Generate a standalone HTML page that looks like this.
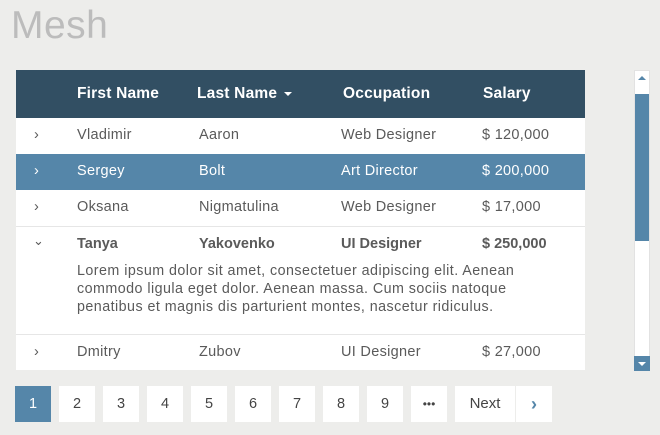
<!DOCTYPE html>
<html><head><style>
*{margin:0;padding:0;box-sizing:border-box}
body{width:660px;height:435px;background:#ededeb;font-family:"Liberation Sans",sans-serif;position:relative;overflow:hidden;color:#555}
.a{position:absolute;white-space:nowrap}
h1{position:absolute;left:11px;top:4px;font-weight:normal;font-size:39px;color:#bcbcbc;letter-spacing:0.5px}
.tbl{position:absolute;left:16px;top:70px;width:569px;height:300px;background:#fff}
.hd{position:absolute;left:0;top:0;width:569px;height:48px;background:#324f63;color:#fff;font-weight:bold;font-size:15.5px;letter-spacing:0.2px}
.row{position:absolute;left:0;width:569px;height:36px;font-size:14.5px;color:#5a5a5a;letter-spacing:0.3px}
.row span{position:absolute;top:9px}
.sel{background:#5586a9;color:#fff}
.bt{border-top:1px solid #e6e6e6}
.pg{position:absolute;top:386px;width:36px;height:36px;background:#fff;color:#444;font-size:14.5px;text-align:center;line-height:36px}
</style></head><body>
<h1>Mesh</h1>
<div class="tbl">
 <div class="hd">
  <span class="a" style="left:61px;top:15px">First Name</span>
  <span class="a" style="left:181px;top:15px">Last Name <span style="display:inline-block;border-left:4px solid transparent;border-right:4px solid transparent;border-top:4px solid #fff;vertical-align:middle;margin-left:2px"></span></span>
  <span class="a" style="left:327px;top:15px">Occupation</span>
  <span class="a" style="left:467px;top:15px">Salary</span>
 </div>
 <div class="row" style="top:48px"><span style="left:18px">›</span><span style="left:61px">Vladimir</span><span style="left:183px">Aaron</span><span style="left:325px">Web Designer</span><span style="left:466px">$ 120,000</span></div>
 <div class="row sel" style="top:84px"><span style="left:18px">›</span><span style="left:61px">Sergey</span><span style="left:183px">Bolt</span><span style="left:325px">Art Director</span><span style="left:466px">$ 200,000</span></div>
 <div class="row" style="top:120px"><span style="left:18px">›</span><span style="left:61px">Oksana</span><span style="left:183px">Nigmatulina</span><span style="left:325px">Web Designer</span><span style="left:466px">$ 17,000</span></div>
 <div class="row bt" style="top:156px;height:108px;font-weight:bold;letter-spacing:0"><span style="left:17px;top:6px;font-weight:normal;font-size:13px">⌄</span><span style="left:61px">Tanya</span><span style="left:183px">Yakovenko</span><span style="left:325px">UI Designer</span><span style="left:466px">$ 250,000</span>
  <span style="left:61px;top:35px;font-weight:normal;font-size:14.3px;line-height:18px;letter-spacing:0.45px;white-space:nowrap">Lorem ipsum dolor sit amet, consectetuer adipiscing elit. Aenean<br>commodo ligula eget dolor. Aenean massa. Cum sociis natoque<br>penatibus et magnis dis parturient montes, nascetur ridiculus.</span></div>
 <div class="row bt" style="top:264px"><span style="left:18px">›</span><span style="left:61px">Dmitry</span><span style="left:183px">Zubov</span><span style="left:325px">UI Designer</span><span style="left:466px">$ 27,000</span></div>
</div>
<div class="a" style="left:634px;top:70px;width:16px;height:301px;background:#fff;border:1px solid #e2e2e2"></div>
<div class="a" style="left:638px;top:76px;border-left:4px solid transparent;border-right:4px solid transparent;border-bottom:4px solid #5586a9"></div>
<div class="a" style="left:635px;top:94px;width:14px;height:147px;background:#5586a9"></div>
<div class="a" style="left:634px;top:356px;width:16px;height:15px;background:#5586a9"></div>
<div class="a" style="left:638px;top:362px;border-left:4px solid transparent;border-right:4px solid transparent;border-top:4px solid #fff"></div>
<div class="pg" style="left:15px;background:#5586a9;color:#fff">1</div>
<div class="pg" style="left:59px">2</div>
<div class="pg" style="left:103px">3</div>
<div class="pg" style="left:147px">4</div>
<div class="pg" style="left:191px">5</div>
<div class="pg" style="left:235px">6</div>
<div class="pg" style="left:279px">7</div>
<div class="pg" style="left:323px">8</div>
<div class="pg" style="left:367px">9</div>
<div class="pg" style="left:411px;font-size:12px">•••</div>
<div class="pg" style="left:455px;width:60px;font-size:15px">Next</div>
<div class="pg" style="left:516px;color:#5586a9;font-weight:bold;font-size:18px">›</div>
</body></html>
